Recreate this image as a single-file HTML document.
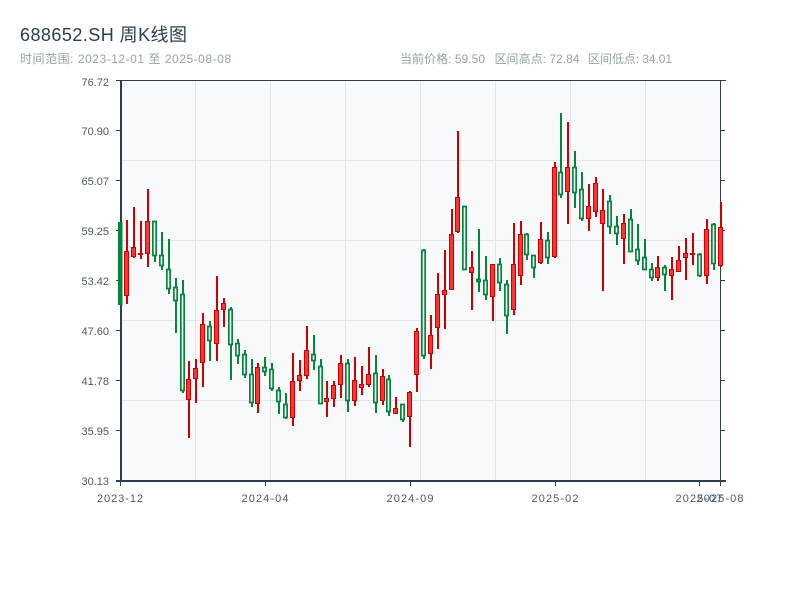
<!DOCTYPE html>
<html><head><meta charset="utf-8"><style>
html,body{margin:0;padding:0;background:#fff;width:800px;height:600px;overflow:hidden}
svg{display:block;font-family:"Liberation Sans","Noto Sans CJK SC",sans-serif}
</style></head><body>
<svg width="800" height="600" viewBox="0 0 800 600" xmlns="http://www.w3.org/2000/svg">
<rect x="121" y="81" width="600" height="400" fill="#f8f9fa"/>
<path d="M195.5 81V480M270.5 81V480M345.5 81V480M420.5 81V480M495.5 81V480M570.5 81V480M645.5 81V480M121 160.5H720M121 240.5H720M121 320.5H720M121 400.5H720" stroke="#e3e5ea" stroke-width="1" fill="none"/>
<path d="M116 80.5H726M720.5 80V481" stroke="#2c3e50" stroke-width="1" fill="none"/>
<path d="M121 80V482M116 481H726" stroke="#2c3e50" stroke-width="2" fill="none"/>
<path d="M116 130.5H121M116 180.5H121M116 230.5H121M116 280.5H121M116 330.5H121M116 380.5H121M116 430.5H121M720 130.5H725M720 180.5H725M720 230.5H725M720 280.5H725M720 330.5H725M720 380.5H725M720 430.5H725M120.5 482V486M265.5 482V486M410.5 482V486M555.5 482V486M699.5 482V486M720.5 482V486" stroke="#2c3e50" stroke-width="1" fill="none"/>
<rect x="118" y="222" width="4.5" height="83" fill="#00873c"/>
<path stroke="#00873c" stroke-width="2" fill="none" d="M155 221V262M162 232V270M169 239V294M176 278V333M183 280V393M210 321V361M231 307V380M238 339V364M245 350V378M252 359V407M265 357V376M272 363V391M279 387V414M286 393V419M314 335V370M321 359V404M348 359V412M376 355V413M389 375V416M403 404V422M424 249V359M465 206V270M479 229V292M486 256V300M500 258V291M507 280V334M527 233V260M534 255V278M548 232V264M561 113V198M575 151V208M582 172V221M610 195V234M617 216V245M631 209V252M638 224V265M645 239V270M652 263V281M665 265V291M700 253V277M714 223V270"/>
<path transform="translate(.35 0)" stroke="#00873c" stroke-width="1.7" fill="#f8f9fa" d="M152.5 221.5h3.3V255.5h-3.3zM159.5 255.5h3.3V265.5h-3.3zM166.5 269.5h3.3V288.5h-3.3zM173.5 287.5h3.3V300.5h-3.3zM180.5 294.5h3.3V390.5h-3.3zM207.5 326.5h3.3V340.5h-3.3zM228.5 309.5h3.3V344.5h-3.3zM235.5 343.5h3.3V355.5h-3.3zM242.5 354.5h3.3V374.5h-3.3zM249.5 374.5h3.3V402.5h-3.3zM262.5 367.5h3.3V371.5h-3.3zM269.5 369.5h3.3V388.5h-3.3zM276.5 390.5h3.3V401.5h-3.3zM283.5 404.5h3.3V417.5h-3.3zM311.5 354.5h3.3V360.5h-3.3zM318.5 366.5h3.3V403.5h-3.3zM345.5 363.5h3.3V400.5h-3.3zM373.5 373.5h3.3V402.5h-3.3zM386.5 379.5h3.3V411.5h-3.3zM400.5 404.5h3.3V419.5h-3.3zM421.5 250.5h3.3V355.5h-3.3zM462.5 206.5h3.3V269.5h-3.3zM476.5 279.5h3.3V281.5h-3.3zM483.5 280.5h3.3V294.5h-3.3zM497.5 264.5h3.3V282.5h-3.3zM504.5 284.5h3.3V315.5h-3.3zM524.5 234.5h3.3V254.5h-3.3zM531.5 255.5h3.3V267.5h-3.3zM545.5 240.5h3.3V257.5h-3.3zM558.5 172.5h3.3V194.5h-3.3zM572.5 167.5h3.3V192.5h-3.3zM579.5 189.5h3.3V218.5h-3.3zM607.5 201.5h3.3V226.5h-3.3zM614.5 226.5h3.3V233.5h-3.3zM628.5 219.5h3.3V251.5h-3.3zM635.5 249.5h3.3V260.5h-3.3zM642.5 257.5h3.3V269.5h-3.3zM649.5 269.5h3.3V277.5h-3.3zM662.5 267.5h3.3V274.5h-3.3zM697.5 254.5h3.3V275.5h-3.3zM711.5 224.5h3.3V263.5h-3.3z"/>
<path stroke="#cc0000" stroke-width="2" fill="none" d="M127 220V304M134 207V258M141 221V259M148 189V267M189 361V438M196 359V403M203 313V387M217 276V361M224 298V327M258 363V413M293 353V426M300 360V391M307 326V379M327 381V417M334 381V407M341 355V398M355 357V406M362 366V395M369 347V387M383 369V405M396 397V413M410 391V447M417 328V392M431 315V369M438 273V349M445 250V329M452 209V289M458 131V233M472 251V310M493 264V321M514 223V315M521 221V285M541 222V264M555 162V258M568 122V224M589 184V231M596 177V217M603 189V291M624 214V264M658 256V281M672 257V300M679 246V272M686 238V280M693 233V265M707 219V284M721 202V267"/>
<path stroke="#cc0000" stroke-width="1" fill="#ff3333" d="M124.5 251.5h4V295.5h-4zM131.5 247.5h4V256.5h-4zM138.5 253.5h4V254.5h-4zM145.5 221.5h4V253.5h-4zM186.5 379.5h4V399.5h-4zM193.5 368.5h4V378.5h-4zM200.5 324.5h4V362.5h-4zM214.5 310.5h4V343.5h-4zM221.5 303.5h4V309.5h-4zM255.5 367.5h4V403.5h-4zM290.5 381.5h4V417.5h-4zM297.5 375.5h4V380.5h-4zM304.5 350.5h4V375.5h-4zM324.5 398.5h4V401.5h-4zM331.5 385.5h4V398.5h-4zM338.5 363.5h4V384.5h-4zM352.5 380.5h4V400.5h-4zM359.5 384.5h4V387.5h-4zM366.5 374.5h4V384.5h-4zM380.5 376.5h4V400.5h-4zM393.5 408.5h4V413.5h-4zM407.5 392.5h4V416.5h-4zM414.5 331.5h4V374.5h-4zM428.5 335.5h4V353.5h-4zM435.5 294.5h4V327.5h-4zM442.5 290.5h4V294.5h-4zM449.5 234.5h4V289.5h-4zM455.5 197.5h4V231.5h-4zM469.5 267.5h4V272.5h-4zM490.5 264.5h4V296.5h-4zM511.5 264.5h4V309.5h-4zM518.5 234.5h4V275.5h-4zM538.5 239.5h4V262.5h-4zM552.5 167.5h4V256.5h-4zM565.5 167.5h4V191.5h-4zM586.5 206.5h4V218.5h-4zM593.5 183.5h4V211.5h-4zM600.5 210.5h4V223.5h-4zM621.5 223.5h4V238.5h-4zM655.5 267.5h4V277.5h-4zM669.5 269.5h4V275.5h-4zM676.5 260.5h4V271.5h-4zM683.5 253.5h4V257.5h-4zM690.5 253.5h4V254.5h-4zM704.5 229.5h4V275.5h-4zM718.5 227.5h4V265.5h-4z"/>
<text x="20" y="41" font-size="18" fill="#2c3e50" textLength="167">688652.SH 周K线图</text>
<text x="20" y="63" font-size="12" fill="#95a5a6" textLength="211">时间范围: 2023-12-01 至 2025-08-08</text>
<text x="400" y="63" font-size="12" fill="#95a5a6" textLength="85">当前价格: 59.50</text>
<text x="494.5" y="63" font-size="12" fill="#95a5a6" textLength="85">区间高点: 72.84</text>
<text x="588" y="63" font-size="12" fill="#95a5a6" textLength="84">区间低点: 34.01</text>
<g font-size="11" fill="#4c5a68" text-anchor="end">
<text x="109" y="86">76.72</text><text x="109" y="135">70.90</text><text x="109" y="185">65.07</text><text x="109" y="235">59.25</text><text x="109" y="285">53.42</text><text x="109" y="335">47.60</text><text x="109" y="385">41.78</text><text x="109" y="435">35.95</text><text x="109" y="485">30.13</text>
</g>
<g font-size="11" fill="#4c5a68" text-anchor="middle">
<text x="120" y="502" textLength="46">2023-12</text><text x="265" y="502" textLength="47">2024-04</text><text x="410" y="502" textLength="47">2024-09</text><text x="555" y="502" textLength="47">2025-02</text><text x="699" y="502" textLength="47">2025-07</text><text x="720" y="502" textLength="47">2025-08</text>
</g>
</svg>
</body></html>
